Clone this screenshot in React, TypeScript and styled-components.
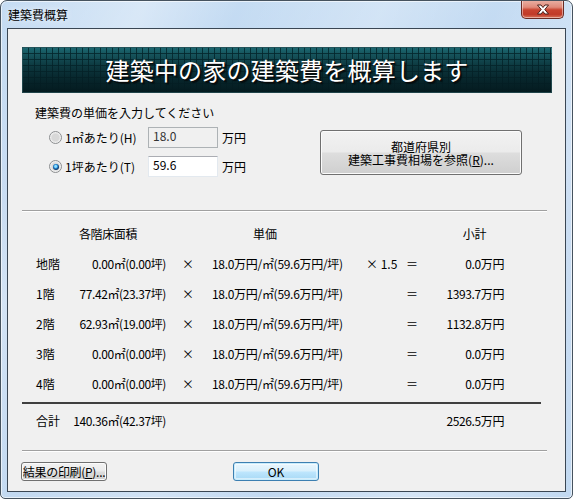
import React from 'react';
import styled, { createGlobalStyle } from 'styled-components';

const Global = createGlobalStyle`
  html, body { margin: 0; padding: 0; background: #ffffff; }
  body {
    font-family: "Noto Sans CJK JP", "Noto Sans", sans-serif;
    font-size: 12px;
    color: #000;
  }
`;

const Window = styled.div`
  width: 573px;
  height: 499px;
  box-sizing: border-box;
  display: flex;
  flex-direction: column;
  border: 1px solid #46535f;
  border-radius: 7px 7px 5px 5px;
  overflow: hidden;
  background:
    linear-gradient(115deg, rgba(255,255,255,0) 0%, rgba(255,255,255,0.35) 18%, rgba(255,255,255,0) 30%, rgba(255,255,255,0.25) 48%, rgba(255,255,255,0) 62%, rgba(255,255,255,0.3) 80%, rgba(255,255,255,0) 100%),
    linear-gradient(180deg, #c5dcf3 0%, #b9d2ee 40%, #c2d9f1 100%);
  box-shadow: inset 0 0 0 1px rgba(255,255,255,0.6);
`;

const TitleBar = styled.div`
  height: 27px;
  display: flex;
  align-items: flex-start;
  flex-shrink: 0;
`;

const TitleText = styled.span`
  margin: 6px 0 0 7px;
  font-size: 12px;
  line-height: 16px;
  color: #000;
  text-shadow: 0 0 6px rgba(255,255,255,0.9);
`;

const CloseButton = styled.div`
  margin: -1px 8px 0 auto;
  width: 43px;
  height: 19px;
  box-sizing: border-box;
  border: 1px solid #6a2b24;
  border-top: none;
  border-radius: 0 0 5px 5px;
  background: linear-gradient(180deg, #eab2a6 0%, #e08a7a 40%, #c8432f 55%, #c13a28 80%, #d8745a 100%);
  box-shadow: inset 0 0 0 1px rgba(255,255,255,0.45);
  display: flex;
  align-items: center;
  justify-content: center;
`;

const FrameBody = styled.div`
  flex: 1;
  display: flex;
  padding: 0 6px 6px 6px;
  min-height: 0;
`;

const Client = styled.div`
  flex: 1;
  display: flex;
  flex-direction: column;
  border: 1px solid #3a4653;
  background: #f0f0f0;
  min-height: 0;
`;

const Banner = styled.div`
  margin: 18px 13px 0 14px;
  height: 46px;
  display: flex;
  align-items: center;
  justify-content: center;
  background:
    linear-gradient(180deg, rgba(5,32,38,0) 0%, rgba(5,32,38,0.6) 45%, rgba(4,26,31,0.97) 100%),
    repeating-linear-gradient(90deg, rgba(4,40,46,0.85) 0 1px, transparent 1px 6px),
    repeating-linear-gradient(180deg, rgba(4,40,46,0.85) 0 1px, transparent 1px 6px),
    linear-gradient(180deg, #1d6a73 0%, #145058 55%, #0a3339 100%);
  box-shadow: inset 0 0 0 1px rgba(120,190,200,0.25);
`;

const BannerText = styled.span`
  color: #ffffff;
  font-size: 24px;
  line-height: 30px;
  letter-spacing: 0.2px;
  text-shadow: 1px 1px 0 #0a0a0a, 2px 2px 1px rgba(0,0,0,0.6);
`;

const TopSection = styled.div`
  display: flex;
  align-items: flex-start;
  margin-top: 13px;
  padding-left: 27px;
`;

const InputColumn = styled.div`
  display: flex;
  flex-direction: column;
`;

const Instruction = styled.div`
  line-height: 14px;
  height: 14px;
`;

const UnitRow = styled.div<{ $gap: number }>`
  display: flex;
  align-items: center;
  margin-top: ${p => p.$gap}px;
  margin-left: 14px;
  height: 21px;
`;

const RadioLabel = styled.label`
  width: 99px;
  display: flex;
  align-items: center;
  gap: 3px;
  line-height: 14px;
`;

const RadioCircle = styled.span<{ $checked?: boolean }>`
  position: relative;
  width: 13px;
  height: 13px;
  box-sizing: border-box;
  border-radius: 50%;
  border: 1px solid #8c8e90;
  background: radial-gradient(circle at 50% 50%, #d8d8d8 0 3.5px, #e8e8e8 4.5px, #fbfbfb 6px);
  flex-shrink: 0;
  &::after {
    content: '';
    display: ${p => (p.$checked ? 'block' : 'none')};
    position: absolute;
    left: 2.5px;
    top: 2.5px;
    width: 6px;
    height: 6px;
    border-radius: 50%;
    background: radial-gradient(circle at 45% 40%, #8fe0ff 0 1px, #1f86d8 2px, #14406f 3px);
  }
`;

const NumberBox = styled.div<{ $disabled?: boolean }>`
  width: 70px;
  height: 21px;
  box-sizing: border-box;
  border: 1px solid ${p => (p.$disabled ? '#adb2b5' : '#e3e9ef')};
  border-top-color: ${p => (p.$disabled ? '#adb2b5' : '#abadb3')};
  background: ${p => (p.$disabled ? '#f0f0f0' : '#ffffff')};
  padding: 1px 4px;
  line-height: 14px;
  color: ${p => (p.$disabled ? '#333' : '#000')};
`;

const Unit = styled.span`
  margin-left: 4px;
  line-height: 14px;
`;

const ReferButton = styled.button`
  margin: 24px 43px 0 auto;
  width: 202px;
  height: 45px;
  box-sizing: border-box;
  border: 1px solid #707070;
  border-radius: 3px;
  background: linear-gradient(180deg, #f2f2f2 0%, #ebebeb 48%, #dddddd 52%, #cfcfcf 100%);
  box-shadow: inset 0 0 0 1px #fbfbfb;
  font-family: inherit;
  font-size: 12px;
  line-height: 13px;
  color: #000;
  padding: 0;
  text-align: center;
`;

const Underline = styled.span`
  text-decoration: underline;
`;

const Separator = styled.div<{ $top: number; $right: number }>`
  margin: ${p => p.$top}px ${p => p.$right}px 0 14px;
  height: 1px;
  background: #a0a0a0;
  box-shadow: 0 1px 0 #ffffff;
`;

const Table = styled.div`
  margin: 7px 0 0 14px;
  display: grid;
  grid-template-columns: 48px 96px 44px 156px 34px 24px 80px;
  grid-template-rows: 31px repeat(5, 30px);
  align-items: center;
  white-space: nowrap;
`;

const TotalGrid = styled(Table)`
  margin-top: 0;
  grid-template-rows: 34px;
`;

const Cell = styled.div<{ $align?: 'left' | 'right' | 'center'; $pl?: number; $pr?: number }>`
  text-align: ${p => p.$align || 'left'};
  padding-left: ${p => p.$pl || 0}px;
  padding-right: ${p => p.$pr || 0}px;
  line-height: 14px;
  letter-spacing: ${p => (p.$align === 'right' ? '-0.4px' : '0')};
`;

const UnitPrice = styled.div`
  padding-left: 2px;
  line-height: 14px;
  letter-spacing: -0.3px;
`;

const ThickRule = styled.div`
  margin: 3px 24px 0 14px;
  height: 2px;
  background: #3f3f3f;
`;

const ButtonRow = styled.div`
  display: flex;
  align-items: flex-start;
  margin-top: 11px;
  padding-left: 13px;
`;

const PrintButton = styled.button`
  width: 86px;
  height: 19px;
  box-sizing: border-box;
  border: 1px solid #707070;
  border-radius: 3px;
  background: linear-gradient(180deg, #f2f2f2 0%, #ebebeb 48%, #dddddd 52%, #cfcfcf 100%);
  box-shadow: inset 0 0 0 1px #fbfbfb;
  font-family: inherit;
  font-size: 12px;
  line-height: 14px;
  padding: 0;
  color: #000;
  white-space: nowrap;
  overflow: visible;
  display: flex;
  align-items: center;
  justify-content: center;
  letter-spacing: -0.3px;
`;

const OkButton = styled.button`
  margin-left: 126px;
  width: 86px;
  height: 19px;
  box-sizing: border-box;
  border: 1px solid #3c7fb1;
  border-radius: 3px;
  background: linear-gradient(180deg, #eaf6fd 0%, #d9f0fc 48%, #bee6fd 52%, #a7d9f5 100%);
  box-shadow: inset 0 0 0 1px #c8ecfc, inset 0 0 0 2px rgba(255,255,255,0.5);
  font-family: inherit;
  font-size: 12px;
  line-height: 14px;
  padding: 0;
  color: #000;
`;

type Row = { floor: string; area: string; mult?: string; subtotal: string };

const rows: Row[] = [
  { floor: '地階', area: '0.00㎡(0.00坪)', mult: '× 1.5', subtotal: '0.0万円' },
  { floor: '1階', area: '77.42㎡(23.37坪)', subtotal: '1393.7万円' },
  { floor: '2階', area: '62.93㎡(19.00坪)', subtotal: '1132.8万円' },
  { floor: '3階', area: '0.00㎡(0.00坪)', subtotal: '0.0万円' },
  { floor: '4階', area: '0.00㎡(0.00坪)', subtotal: '0.0万円' },
];

const CloseIcon = () => (
  <svg width="14" height="11" viewBox="0 0 14 11">
    <path
      d="M1.5 1 L5 1 L7 3.5 L9 1 L12.5 1 L8.8 5.5 L12.5 10 L9 10 L7 7.5 L5 10 L1.5 10 L5.2 5.5 Z"
      fill="#ffffff"
      stroke="#4a1e18"
      strokeWidth="1"
      strokeLinejoin="round"
    />
  </svg>
);

export default function App() {
  return (
    <>
      <Global />
      <Window>
        <TitleBar>
          <TitleText>建築費概算</TitleText>
          <CloseButton>
            <CloseIcon />
          </CloseButton>
        </TitleBar>
        <FrameBody>
          <Client>
            <Banner>
              <BannerText>建築中の家の建築費を概算します</BannerText>
            </Banner>

            <TopSection>
              <InputColumn>
                <Instruction>建築費の単価を入力してください</Instruction>
                <UnitRow $gap={7}>
                  <RadioLabel>
                    <RadioCircle />
                    <span>1㎡あたり(H)</span>
                  </RadioLabel>
                  <NumberBox $disabled>18.0</NumberBox>
                  <Unit>万円</Unit>
                </UnitRow>
                <UnitRow $gap={8}>
                  <RadioLabel>
                    <RadioCircle $checked />
                    <span>1坪あたり(T)</span>
                  </RadioLabel>
                  <NumberBox>59.6</NumberBox>
                  <Unit>万円</Unit>
                </UnitRow>
              </InputColumn>
              <ReferButton>
                都道府県別
                <br />
                建築工事費相場を参照(<Underline>R</Underline>)...
              </ReferButton>
            </TopSection>

            <Separator $top={33} $right={18} />

            <Table>
              <Cell />
              <Cell $align="right" $pr={29}>各階床面積</Cell>
              <Cell />
              <Cell $pl={43}>単価</Cell>
              <Cell />
              <Cell />
              <Cell $align="right" $pr={18}>小計</Cell>
              {rows.map(r => (
                <React.Fragment key={r.floor}>
                  <Cell $pl={14}>{r.floor}</Cell>
                  <Cell $align="right">{r.area}</Cell>
                  <Cell $align="center">×</Cell>
                  <UnitPrice>18.0万円/㎡(59.6万円/坪)</UnitPrice>
                  <Cell>{r.mult || ''}</Cell>
                  <Cell $align="center">＝</Cell>
                  <Cell $align="right">{r.subtotal}</Cell>
                </React.Fragment>
              ))}
            </Table>

            <ThickRule />

            <TotalGrid>
              <Cell $pl={14}>合計</Cell>
              <Cell $align="right">140.36㎡(42.37坪)</Cell>
              <Cell />
              <Cell />
              <Cell />
              <Cell />
              <Cell $align="right">2526.5万円</Cell>
            </TotalGrid>

            <Separator $top={12} $right={18} />

            <ButtonRow>
              <PrintButton>
                結果の印刷(<Underline>P</Underline>)...
              </PrintButton>
              <OkButton>OK</OkButton>
            </ButtonRow>
          </Client>
        </FrameBody>
      </Window>
    </>
  );
}
